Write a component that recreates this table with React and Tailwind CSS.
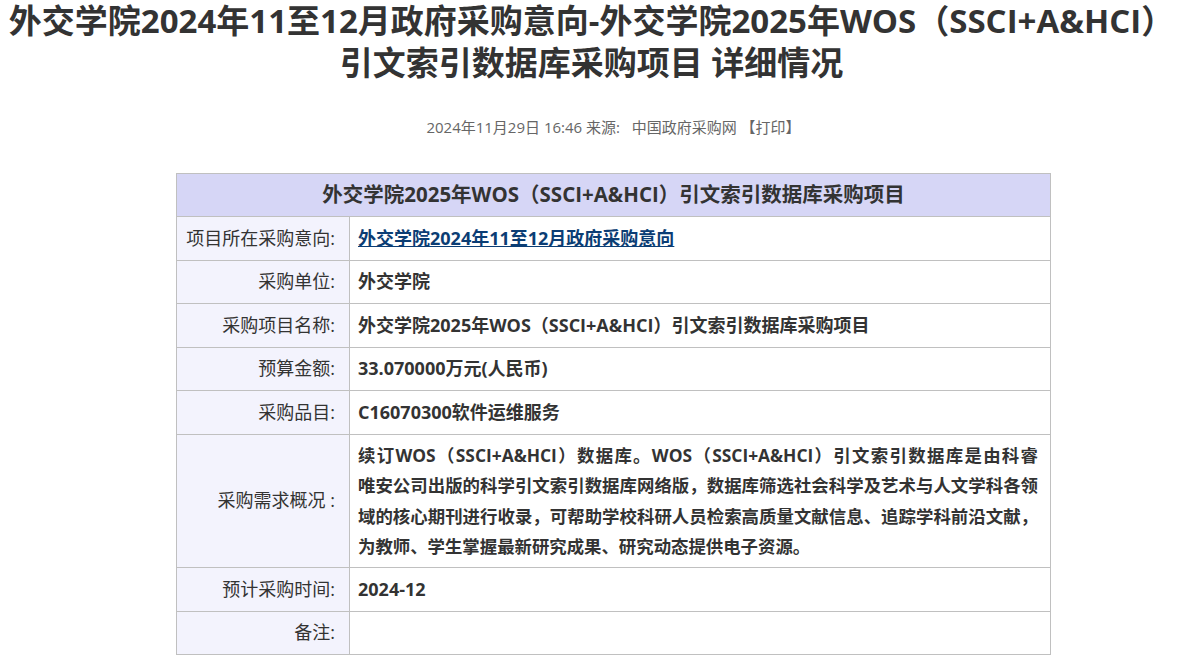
export default function App() {
  const font = { fontFamily: '"Open Sans", "Noto Sans CJK SC", sans-serif' };
  const justified = "block whitespace-nowrap [text-align-last:justify] text-justify";
  const desc = (
    <>
      <span className={justified}>续订WOS（SSCI+A&HCI）数据库。WOS（SSCI+A&HCI）引文索引数据库是由科睿</span>
      <span className={justified}>唯安公司出版的科学引文索引数据库网络版，数据库筛选社会科学及艺术与人文学科各领</span>
      <span className={justified}>域的核心期刊进行收录，可帮助学校科研人员检索高质量文献信息、追踪学科前沿文献，</span>
      <span className="block whitespace-nowrap">为教师、学生掌握最新研究成果、研究动态提供电子资源。</span>
    </>
  );
  const rows = [
    { label: "项目所在采购意向:", h: "h-[44px]", value: <a href="#" className="text-[#0b3d74] underline">外交学院2024年11至12月政府采购意向</a> },
    { label: "采购单位:", h: "h-[43px]", value: "外交学院" },
    { label: "采购项目名称:", h: "h-[44px]", value: "外交学院2025年WOS（SSCI+A&HCI）引文索引数据库采购项目" },
    { label: "预算金额:", h: "h-[43px]", value: "33.070000万元(人民币)" },
    { label: "采购品目:", h: "h-[44px]", value: "C16070300软件运维服务" },
    { label: "采购需求概况 :", h: "h-[133px]", value: desc, tall: true },
    { label: "预计采购时间:", h: "h-[44px]", value: "2024-12" },
    { label: "备注:", h: "h-[43px]", value: "" },
  ];
  return (
    <div className="bg-white text-[#333]" style={font}>
      <h1 className="text-center text-[33px] font-bold leading-[42px] text-[#333] pt-0">
        外交学院2024年11至12月政府采购意向-外交学院2025年WOS（SSCI+A&HCI）引文索引数据库采购项目 详细情况
      </h1>
      <div className="pl-[44px]">
        <div className="text-center text-[15px] text-[#666] mt-[32px]">
          2024年11月29日 16:46 来源:&nbsp;&nbsp; 中国政府采购网 【打印】
        </div>
        <table className="mx-auto mt-[34px] w-[875px] table-fixed border-collapse text-[18px]">
          <colgroup>
            <col className="w-[173px]" />
            <col />
          </colgroup>
          <tbody>
            <tr>
              <th colSpan={2} className="h-[43px] border border-[#c0c0c0] bg-[#d6d6f6] text-center text-[20.5px] font-bold text-[#333]">
                外交学院2025年WOS（SSCI+A&HCI）引文索引数据库采购项目
              </th>
            </tr>
            {rows.map((r, i) => (
              <tr key={i}>
                <td className={`border border-[#c0c0c0] bg-[#f3f3fd] pl-2 pr-[14px] text-right ${r.h}`}>
                  {r.label}
                </td>
                <td className={`border border-[#c0c0c0] bg-white pl-2 font-bold ${r.tall ? "pr-[12px] py-[5px] text-[17.4px] leading-[30.5px]" : "pr-2"}`}>
                  {r.value}
                </td>
              </tr>
            ))}
          </tbody>
        </table>
      </div>
    </div>
  );
}
